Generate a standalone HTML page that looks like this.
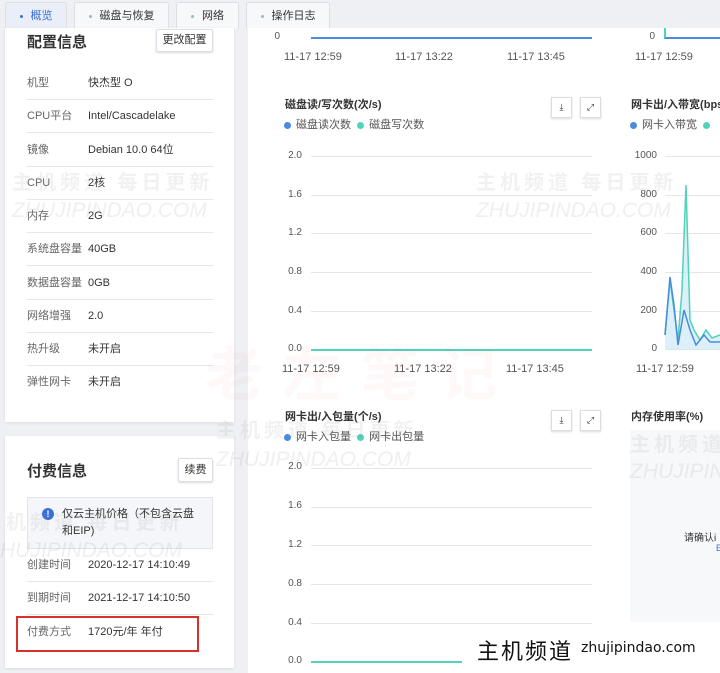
<!DOCTYPE html><html><head><meta charset="utf-8"><style>
*{margin:0;padding:0;box-sizing:border-box}
body{width:720px;height:673px;overflow:hidden;background:#eef0f4;font-family:"Liberation Sans","Noto Sans CJK SC",sans-serif;font-size:11px;color:#333;position:relative}
.a{position:absolute}
.tab{position:absolute;top:2px;height:27px;background:#f7f8fa;border:1px solid #dcdfe6;border-bottom:none;border-radius:3px 3px 0 0;font-size:11px;line-height:26px;text-align:center;color:#333}
.tab b{display:inline-block;width:3px;height:3px;background:#9bb;border-radius:50%;vertical-align:middle;margin-right:8px}
.card{position:absolute;left:5px;width:229px;background:#fff;box-shadow:0 1px 3px rgba(0,0,0,.08)}
.row{position:absolute;left:22px;width:186px;height:33px;border-bottom:1px solid #e8e8e8;line-height:33px}
.row span{position:absolute;left:0;color:#666}
.row i{font-style:normal;position:absolute;left:61px;color:#333}
.btn{position:absolute;background:#fff;border:1px solid #dcdfe6;box-shadow:0 1px 2px rgba(0,0,0,.15);font-size:11px;text-align:center;border-radius:2px}
.gl{position:absolute;height:1px;background:#e6e6e6}
.yl{position:absolute;font-size:10px;color:#555;text-align:right;width:30px}
.xl{position:absolute;font-size:11px;color:#555}
.ib{position:absolute;width:21px;height:21px;background:#fff;border:1px solid #ddd;box-shadow:0 1px 2px rgba(0,0,0,.15);font-size:9px;text-align:center;line-height:19px;color:#333}
.dot{display:inline-block;width:7px;height:7px;border-radius:50%;margin-right:5px;vertical-align:middle}
.wm{position:absolute;color:rgba(150,150,150,.13);font-size:20px;letter-spacing:4px;font-weight:bold;white-space:nowrap}
.wme{position:absolute;color:rgba(150,150,150,.15);font-size:21px;font-style:italic;white-space:nowrap}
</style></head><body>
<div class="tab" style="left:5px;width:62px;background:#e9eef8;color:#3a6fd8"><b style="background:#3a6fd8"></b>概览</div>
<div class="tab" style="left:74px;width:95px"><b></b>磁盘与恢复</div>
<div class="tab" style="left:176px;width:63px"><b></b>网络</div>
<div class="tab" style="left:246px;width:84px"><b></b>操作日志</div>

<div class="card" style="top:28px;height:394px">
<div class="a" style="left:22px;top:3px;font-size:15px;font-weight:bold">配置信息</div>
<div class="btn" style="left:151px;top:1px;width:57px;height:23px;line-height:21px">更改配置</div>
<div class="row" style="top:39px"><span>机型</span><i>快杰型 O</i></div>
<div class="row" style="top:72px"><span>CPU平台</span><i>Intel/Cascadelake</i></div>
<div class="row" style="top:106px"><span>镜像</span><i>Debian 10.0 64位</i></div>
<div class="row" style="top:139px"><span>CPU</span><i>2核</i></div>
<div class="row" style="top:172px"><span>内存</span><i>2G</i></div>
<div class="row" style="top:205px"><span>系统盘容量</span><i>40GB</i></div>
<div class="row" style="top:239px"><span>数据盘容量</span><i>0GB</i></div>
<div class="row" style="top:272px"><span>网络增强</span><i>2.0</i></div>
<div class="row" style="top:305px"><span>热升级</span><i>未开启</i></div>
<div class="row" style="top:338px;border:none"><span>弹性网卡</span><i>未开启</i></div>
</div>

<div class="card" style="top:436px;height:232px">
<div class="a" style="left:22px;top:24px;font-size:15px;font-weight:bold">付费信息</div>
<div class="btn" style="left:173px;top:22px;width:35px;height:24px;line-height:22px">续费</div>
<div class="a" style="left:22px;top:61px;width:186px;height:52px;background:#f5f6fa;border:1px solid #e2e4ea"></div>
<div class="a" style="left:37px;top:72px;width:12px;height:12px;border-radius:50%;background:#3a6fd8;color:#fff;font-size:9px;text-align:center;line-height:12px;font-weight:bold">!</div>
<div class="a" style="left:57px;top:70px;width:136px;font-size:11px;line-height:17px">仅云主机价格（不包含云盘和EIP)</div>
<div class="row" style="top:113px"><span>创建时间</span><i>2020-12-17 14:10:49</i></div>
<div class="row" style="top:146px"><span>到期时间</span><i>2021-12-17 14:10:50</i></div>
<div class="row" style="top:180px;border:none"><span>付费方式</span><i>1720元/年 年付</i></div>
<div class="a" style="left:11px;top:180px;width:183px;height:36px;border:2px solid #d9302c"></div>
</div>

<div class="a" style="left:248px;top:28px;width:472px;height:645px;background:#fff"></div>
<div class="yl" style="left:250px;top:31px">0</div>
<div class="a" style="left:311px;top:37px;width:281px;height:2px;background:#4a8be0"></div>
<div class="xl" style="left:284px;top:51px">11-17 12:59</div>
<div class="xl" style="left:395px;top:51px">11-17 13:22</div>
<div class="xl" style="left:507px;top:51px">11-17 13:45</div>
<div class="yl" style="left:625px;top:31px">0</div>
<div class="a" style="left:664px;top:28px;width:56px;height:11px;border-left:2px solid #4fd3b9;border-bottom:2px solid #4a8be0"></div>
<div class="xl" style="left:635px;top:51px">11-17 12:59</div>

<div class="a" style="left:285px;top:96px;font-size:11px;font-weight:bold">磁盘读/写次数(次/s)</div>
<div class="a" style="left:284px;top:116px;color:#555"><span class="dot" style="background:#4a8be0"></span>磁盘读次数 &nbsp;<span class="dot" style="background:#4fd3b9"></span>磁盘写次数</div>
<div class="ib" style="left:551px;top:97px">⤓</div><div class="ib" style="left:580px;top:97px">⤢</div>
<div class="gl" style="left:311px;top:156px;width:281px"></div><div class="yl" style="left:272px;top:150px">2.0</div>
<div class="gl" style="left:311px;top:195px;width:281px"></div><div class="yl" style="left:272px;top:189px">1.6</div>
<div class="gl" style="left:311px;top:233px;width:281px"></div><div class="yl" style="left:272px;top:227px">1.2</div>
<div class="gl" style="left:311px;top:272px;width:281px"></div><div class="yl" style="left:272px;top:266px">0.8</div>
<div class="gl" style="left:311px;top:311px;width:281px"></div><div class="yl" style="left:272px;top:305px">0.4</div>
<div class="a" style="left:311px;top:349px;width:281px;height:2px;background:#4fd3b9"></div><div class="yl" style="left:272px;top:343px">0.0</div>
<div class="xl" style="left:282px;top:363px">11-17 12:59</div>
<div class="xl" style="left:394px;top:363px">11-17 13:22</div>
<div class="xl" style="left:506px;top:363px">11-17 13:45</div>

<div class="a" style="left:631px;top:96px;font-size:11px;font-weight:bold;white-space:nowrap">网卡出/入带宽(bps</div>
<div class="a" style="left:630px;top:116px;color:#555;white-space:nowrap"><span class="dot" style="background:#4a8be0"></span>网卡入带宽 &nbsp;<span class="dot" style="background:#4fd3b9"></span></div>
<div class="gl" style="left:665px;top:156px;width:55px"></div><div class="yl" style="left:627px;top:150px">1000</div>
<div class="gl" style="left:665px;top:195px;width:55px"></div><div class="yl" style="left:627px;top:189px">800</div>
<div class="gl" style="left:665px;top:233px;width:55px"></div><div class="yl" style="left:627px;top:227px">600</div>
<div class="gl" style="left:665px;top:272px;width:55px"></div><div class="yl" style="left:627px;top:266px">400</div>
<div class="gl" style="left:665px;top:311px;width:55px"></div><div class="yl" style="left:627px;top:305px">200</div>
<div class="gl" style="left:665px;top:349px;width:55px"></div><div class="yl" style="left:627px;top:343px">0</div>
<svg class="a" style="left:660px;top:170px" width="60" height="182"><path d="M5 165 L10 110 L14 140 L18 170 L22 120 L26 15 L30 150 L34 160 L40 170 L46 160 L52 168 L60 165 L60 180 L5 180Z" fill="#cfe8f5" opacity=".7"/><path d="M5 165 L10 110 L14 140 L18 170 L22 120 L26 15 L30 150 L34 160 L40 170 L46 160 L52 168 L60 165" fill="none" stroke="#4fd3b9" stroke-width="1.5"/><path d="M5 165 L10 107 L14 135 L18 175 L24 140 L30 160 L36 175 L44 165 L50 172 L60 172" fill="none" stroke="#4a8be0" stroke-width="1.5"/></svg>
<div class="xl" style="left:636px;top:363px">11-17 12:59</div>

<div class="a" style="left:285px;top:408px;font-size:11px;font-weight:bold">网卡出/入包量(个/s)</div>
<div class="a" style="left:284px;top:428px;color:#555"><span class="dot" style="background:#4a8be0"></span>网卡入包量 &nbsp;<span class="dot" style="background:#4fd3b9"></span>网卡出包量</div>
<div class="ib" style="left:551px;top:410px">⤓</div><div class="ib" style="left:580px;top:410px">⤢</div>
<div class="gl" style="left:311px;top:468px;width:281px"></div><div class="yl" style="left:272px;top:461px">2.0</div>
<div class="gl" style="left:311px;top:507px;width:281px"></div><div class="yl" style="left:272px;top:500px">1.6</div>
<div class="gl" style="left:311px;top:545px;width:281px"></div><div class="yl" style="left:272px;top:539px">1.2</div>
<div class="gl" style="left:311px;top:584px;width:281px"></div><div class="yl" style="left:272px;top:578px">0.8</div>
<div class="gl" style="left:311px;top:623px;width:281px"></div><div class="yl" style="left:272px;top:617px">0.4</div>
<div class="a" style="left:311px;top:661px;width:281px;height:2px;background:#4fd3b9"></div><div class="yl" style="left:272px;top:655px">0.0</div>

<div class="a" style="left:631px;top:408px;font-size:11px;font-weight:bold;white-space:nowrap">内存使用率(%)</div>
<div class="a" style="left:630px;top:430px;width:90px;height:192px;background:#f7f8fa"></div>
<div class="a" style="left:684px;top:529px;font-size:10px;white-space:nowrap">请确认i</div>
<div class="a" style="left:716px;top:543px;font-size:9px;color:#3a6fd8">E</div>

<div class="wm" style="left:12px;top:166px">主机频道 每日更新</div>
<div class="wme" style="left:12px;top:199px">ZHUJIPINDAO.COM</div>
<div class="wm" style="left:476px;top:166px">主机频道 每日更新</div>
<div class="wme" style="left:476px;top:199px">ZHUJIPINDAO.COM</div>
<div class="wm" style="left:216px;top:414px">主机频道 每日更新</div>
<div class="wme" style="left:216px;top:448px">ZHUJIPINDAO.COM</div>
<div class="wm" style="left:630px;top:428px">主机频道</div>
<div class="wme" style="left:630px;top:460px">ZHUJIPIN</div>
<div class="wm" style="left:6px;top:506px">机频道 每日更新</div>
<div class="wme" style="left:0px;top:539px">HUJIPINDAO.COM</div>
<div class="a" style="left:205px;top:328px;font-size:58px;font-weight:bold;color:rgba(230,80,70,.04);letter-spacing:20px;white-space:nowrap">老左笔记</div>

<div class="a" style="left:462px;top:628px;width:258px;height:45px;background:#fff"></div>
<div class="a" style="left:477px;top:634px;font-size:22px;color:#111;white-space:nowrap;font-family:'Noto Sans CJK SC',sans-serif;letter-spacing:2px">主机频道</div>
<div class="a" style="left:581px;top:640px;font-size:14px;color:#111;font-family:'DejaVu Sans',sans-serif;white-space:nowrap">zhujipindao.com</div>
</body></html>
